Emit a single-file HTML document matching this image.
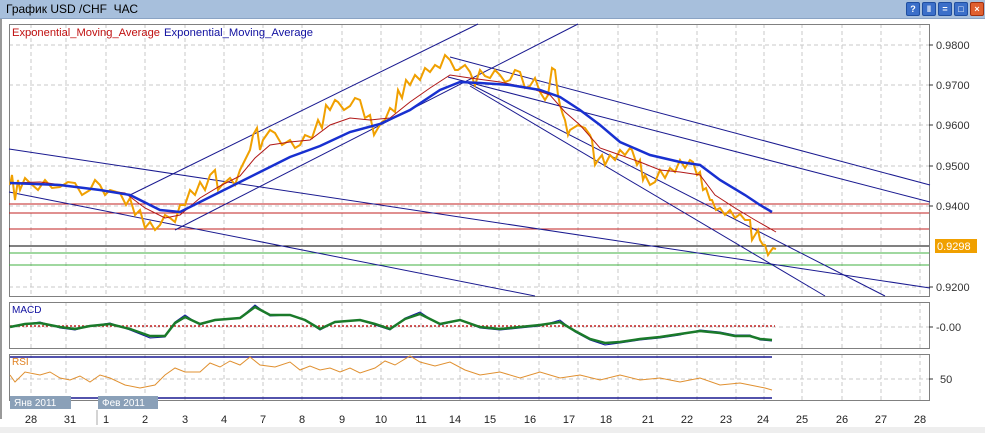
<!DOCTYPE html>
<html><head><meta charset="utf-8"><style>
body{margin:0;width:985px;height:433px;overflow:hidden;background:#fff;font-family:"Liberation Sans","DejaVu Sans",sans-serif;}
.t{position:absolute;left:0;top:0;width:985px;height:18px;background:#a7bfdc;border-bottom:1px solid #8aa3c4;}
.t span{position:absolute;left:6px;top:2px;font-size:12px;color:#000;}
.b{position:absolute;top:2px;width:12px;height:12px;border-radius:2px;background:#3b6fc9;border:1px solid #1f4ea0;color:#fff;font-size:9px;line-height:12px;text-align:center;font-weight:bold}
</style></head><body>
<div class="t"><span>График USD /CHF &nbsp;ЧАС</span>
<div class="b" style="left:906px">?</div><div class="b" style="left:922px">‖</div><div class="b" style="left:938px">=</div><div class="b" style="left:954px">□</div><div class="b" style="left:970px;background:#e06030;border-color:#a03010">×</div></div>
<div style="position:absolute;left:0;top:19px;width:2px;height:400px;background:#999"></div>
<svg style="position:absolute;left:0;top:0" width="985" height="433" font-family="Liberation Sans,DejaVu Sans,sans-serif">
<g stroke="#c8c8c8" stroke-dasharray="4,3" stroke-width="1">
<path d="M31 24V296M66 24V296M106 24V296M145 24V296M185 24V296M224 24V296M263 24V296M302 24V296M342 24V296M381 24V296M421 24V296M460 24V296M499 24V296M539 24V296M578 24V296M618 24V296M657 24V296M697 24V296M736 24V296M764 24V296M802 24V296M842 24V296M881 24V296M920 24V296"/>
<path d="M31 302V348M66 302V348M106 302V348M145 302V348M185 302V348M224 302V348M263 302V348M302 302V348M342 302V348M381 302V348M421 302V348M460 302V348M499 302V348M539 302V348M578 302V348M618 302V348M657 302V348M697 302V348M736 302V348M764 302V348M802 302V348M842 302V348M881 302V348M920 302V348"/>
<path d="M31 354V400M66 354V400M106 354V400M145 354V400M185 354V400M224 354V400M263 354V400M302 354V400M342 354V400M381 354V400M421 354V400M460 354V400M499 354V400M539 354V400M578 354V400M618 354V400M657 354V400M697 354V400M736 354V400M764 354V400M802 354V400M842 354V400M881 354V400M920 354V400"/>
<path d="M9 45H929M9 85H929M9 125H929M9 166H929M9 206H929M9 246H929M9 287H929M9 327H929M9 379H929"/>
</g>
<rect x="9.5" y="24.5" width="920" height="272" fill="none" stroke="#808080"/>
<rect x="9.5" y="302.5" width="920" height="46" fill="none" stroke="#808080"/>
<rect x="9.5" y="354.5" width="920" height="46" fill="none" stroke="#808080"/>
<g font-size="11" fill="#333"><text x="936" y="49">0.9800</text><text x="936" y="89">0.9700</text><text x="936" y="129">0.9600</text><text x="936" y="170">0.9500</text><text x="936" y="210">0.9400</text><text x="936" y="291">0.9200</text><text x="936" y="331">-0.00</text><text x="940" y="383">50</text></g>
<g stroke="#333"><path d="M929 45h4M929 85h4M929 125h4M929 166h4M929 206h4M929 287h4M929 327h4M929 379h4"/></g>
<rect x="935" y="239" width="42" height="14" fill="#f0a000"/><text x="937" y="250" font-size="11" fill="#fff">0.9298</text>
<text x="12" y="36" font-size="11" fill="#c01010" textLength="148" lengthAdjust="spacingAndGlyphs">Exponential_Moving_Average</text><text x="164" y="36" font-size="11" fill="#1010a0" textLength="149" lengthAdjust="spacingAndGlyphs">Exponential_Moving_Average</text>
<g stroke-width="1"><path d="M9 204H929M9 213H929M9 229H929" stroke="#c02020"/><path d="M9 246H929" stroke="#000"/><path d="M9 253H929M9 265H929" stroke="#40b040"/></g>
<g stroke="#1a1a90" stroke-width="1" fill="none">
<path d="M9 149L930 288"/><path d="M9 192L535 296"/>
<path d="M130 195L478 24"/><path d="M175 230L578 24"/>
<path d="M450 57L930 185"/><path d="M448 77L930 202"/>
<path d="M468 83L885 296"/><path d="M470 86L825 296"/>
</g>
<polyline fill="none" stroke="#f0a000" stroke-width="2" points="10,185 12,175 15,200 18,180 20,190 25,178 30,183 38,190 45,180 52,188 60,187 68,182 75,183 82,195 90,190 95,180 100,185 105,195 110,190 120,193 126,205 130,198 135,215 140,210 145,228 150,222 155,230 160,225 165,215 170,218 175,222 180,205 185,205 190,190 195,195 200,182 205,190 210,175 215,170 218,190 222,185 230,178 235,185 240,170 245,160 250,150 253,135 257,128 260,150 263,140 270,130 275,133 282,145 290,140 295,148 300,145 305,135 312,138 318,120 322,128 326,105 330,110 335,100 338,102 344,110 350,106 355,98 360,100 365,118 370,115 374,135 378,128 382,122 385,120 390,108 395,112 398,90 402,98 406,80 410,85 415,75 420,80 425,68 430,72 435,65 440,68 445,55 450,60 455,70 458,70 465,65 470,72 475,85 480,70 485,76 490,78 495,70 500,75 505,82 510,80 515,70 520,72 525,88 530,86 535,78 540,92 545,100 548,95 552,68 555,70 558,95 560,105 563,115 565,120 568,135 570,130 578,125 585,128 590,135 592,140 595,165 598,160 602,155 605,165 610,155 615,160 620,150 625,155 630,148 632,150 637,165 640,160 643,180 645,175 650,185 655,182 660,170 665,178 670,168 675,172 680,160 685,168 690,160 693,162 697,175 700,172 703,190 706,188 710,200 712,200 716,210 720,208 725,215 730,210 735,218 740,214 745,220 750,220 752,240 755,235 758,230 760,240 763,245 765,245 768,255 770,252 773,248 776,249"/>
<polyline fill="none" stroke="#b01818" stroke-width="1" points="10,183 40,182 70,186 100,190 125,193 145,208 165,218 180,215 200,198 220,186 240,176 255,158 270,145 290,142 310,140 330,125 350,118 370,120 390,118 410,102 430,88 450,75 470,78 500,82 530,88 550,95 565,112 580,125 600,148 620,155 640,162 660,170 680,172 700,175 715,195 735,208 755,220 776,232"/>
<polyline fill="none" stroke="#1830d0" stroke-width="2.5" points="10,183 60,185 100,190 130,195 160,210 180,212 200,202 230,187 260,172 290,157 320,146 350,132 380,124 410,110 440,90 460,82 480,83 510,85 540,90 560,97 580,110 600,125 620,142 650,155 680,162 700,165 720,180 745,195 760,205 772,212"/>
<text x="12" y="313" font-size="10" fill="#1010a0">MACD</text>
<path d="M10 326H775" stroke="#c02020" stroke-width="1.5" stroke-dasharray="2,2"/>
<polyline fill="none" stroke="#1010a0" stroke-width="1" points="10,327 25,324 40,322 60,328 75,330 90,326 110,323 130,330 150,338 165,337 175,322 185,315 200,325 215,320 240,318 255,305 270,316 290,315 305,320 320,330 335,322 360,320 375,325 390,330 405,318 420,312 440,325 460,320 480,328 500,330 520,328 540,326 560,320 575,332 590,340 605,345 620,343 640,340 660,338 680,335 700,330 720,332 735,335 750,335 760,340 772,341"/>
<polyline fill="none" stroke="#1a7a2a" stroke-width="2.5" points="10,327 25,324 40,323 60,327 75,329 90,326 110,324 130,329 150,336 165,336 175,323 185,317 200,324 215,320 240,318 255,307 270,315 290,315 305,320 320,329 335,322 360,320 375,324 390,329 405,319 420,314 440,324 460,320 480,327 500,329 520,327 540,325 560,322 575,331 590,339 605,343 620,342 640,339 660,337 680,334 700,331 720,333 735,336 750,336 760,339 772,340"/>
<text x="12" y="365" font-size="10" fill="#e08020">RSI</text>
<path d="M10 357H772M10 398H772" stroke="#1a1a90" stroke-width="1.5"/>
<polyline fill="none" stroke="#e09030" stroke-width="1" points="10,375 15,382 25,372 40,375 50,372 60,378 70,380 80,376 90,382 100,375 110,378 125,385 140,388 145,387 155,385 165,375 175,368 185,372 200,372 210,363 220,367 230,361 240,365 250,357 260,365 275,367 290,362 300,370 310,366 320,370 330,368 340,372 350,368 360,373 375,368 385,361 395,365 410,356 420,362 435,366 450,362 465,370 480,375 500,372 520,378 540,372 560,378 580,375 600,380 620,375 640,380 660,378 680,382 700,378 720,385 740,383 755,386 765,388 772,390"/>
<rect x="10" y="396" width="61" height="13" fill="#8aa0b8"/><text x="14" y="406" font-size="10" fill="#fff">Янв 2011</text>
<rect x="98" y="396" width="60" height="13" fill="#8aa0b8"/><text x="102" y="406" font-size="10" fill="#fff">Фев 2011</text>
<path d="M97 410V425" stroke="#aaa"/>
<g font-size="11" fill="#222" text-anchor="middle"><text x="31" y="423">28</text><text x="70" y="423">31</text><text x="106" y="423">1</text><text x="145" y="423">2</text><text x="185" y="423">3</text><text x="224" y="423">4</text><text x="263" y="423">7</text><text x="302" y="423">8</text><text x="342" y="423">9</text><text x="381" y="423">10</text><text x="421" y="423">11</text><text x="455" y="423">14</text><text x="490" y="423">15</text><text x="530" y="423">16</text><text x="569" y="423">17</text><text x="606" y="423">18</text><text x="648" y="423">21</text><text x="687" y="423">22</text><text x="726" y="423">23</text><text x="763" y="423">24</text><text x="802" y="423">25</text><text x="842" y="423">26</text><text x="881" y="423">27</text><text x="920" y="423">28</text></g>
<rect x="0" y="427" width="985" height="6" fill="#eee"/>
</svg>
</body></html>
